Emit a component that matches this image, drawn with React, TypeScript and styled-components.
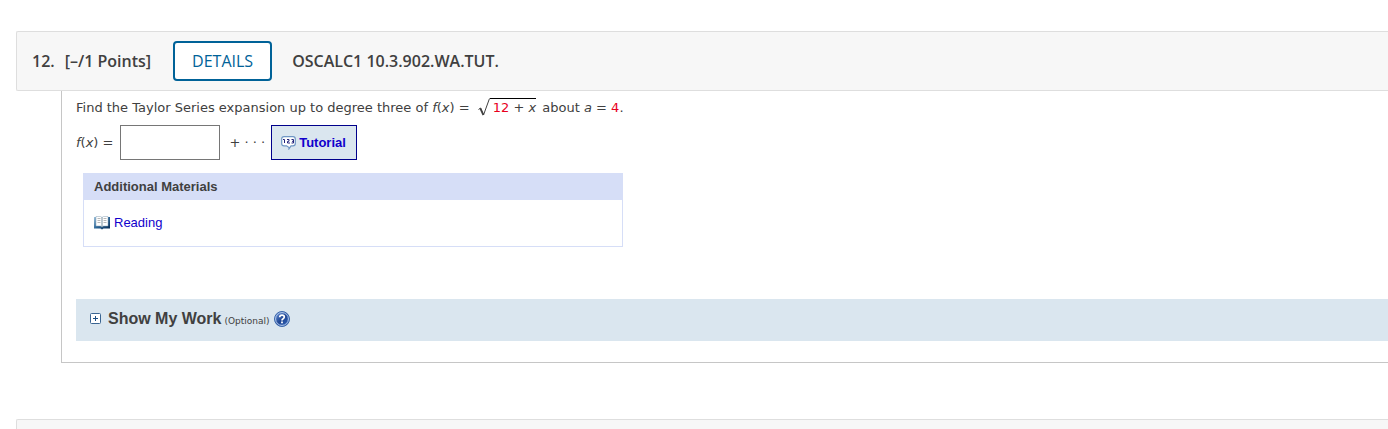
import React from "react";
import styled, { createGlobalStyle } from "styled-components";

const GlobalStyle = createGlobalStyle`
  * { box-sizing: border-box; }
  body {
    margin: 0;
    background: #fff;
    color: #404040;
    font: 13px/18px Verdana, "DejaVu Sans", sans-serif;
  }
`;

const Page = styled.main`
  display: flex;
  flex-direction: column;
  min-height: 100vh;
  padding: 31px 0 0 16px;
  overflow: hidden;
`;

const HeaderBar = styled.header`
  display: flex;
  align-items: center;
  padding: 9px 15px;
  background: #f7f7f7;
  border: 1px solid #dedede;
  border-right: 0;
  border-radius: 2px 0 0 2px;
  font: 600 16px/24px "Open Sans", sans-serif;
`;

const QuestionNumber = styled.span`
  margin-right: 10px;
`;

const Points = styled.span`
  margin-right: 22px;
`;

const DetailsButton = styled.button`
  height: 40px;
  margin-right: 20px;
  padding: 0 17px;
  background: #fff;
  border: 2px solid #006298;
  border-radius: 4px;
  color: #006298;
  font: 400 16px/24px "Open Sans", sans-serif;
`;

const QuestionBody = styled.section`
  margin-left: 45px;
  padding: 7px 0 21px 14px;
  border: solid #c6c6c6;
  border-width: 0 0 1px 1px;
`;

const Statement = styled.p`
  margin: 0 0 8px;
  white-space: nowrap;
`;

const Given = styled.span`
  color: #e8001c;
`;

const Root = styled.span`
  display: inline-flex;
  align-items: flex-end;
  margin: 0 2px 0 4px;
  vertical-align: bottom;
`;

const Radicand = styled.span`
  padding-left: 3px;
  border-top: 1px solid #000;
  line-height: 18px;
`;

const AnswerRow = styled.form`
  display: flex;
  align-items: center;
`;

const AnswerInput = styled.input`
  width: 100px;
  height: 35px;
  margin: 0 9px 0 7px;
  padding: 4px;
  background: #fff;
  border: 1px solid #767676;
  font: inherit;
`;

const TutorialButton = styled.button`
  display: flex;
  align-items: center;
  gap: 3px;
  height: 35px;
  margin-left: 6px;
  padding: 0 10px 0 9px;
  background: #dae6ef;
  border: 1px solid #00008b;
  color: #10c;
  font: bold 13px/18px Arial, "Liberation Sans", sans-serif;
`;

const Materials = styled.section`
  max-width: 540px;
  margin: 13px 7px 52px;
  border: 1px solid #d6def7;
  font: 13px/18px Arial, "Liberation Sans", sans-serif;
`;

const MaterialsTitle = styled.h2`
  margin: 0;
  padding: 4px 10px;
  background: #d6def7;
  font: inherit;
  font-weight: bold;
`;

const MaterialsContent = styled.div`
  display: flex;
  padding: 14px 10px;
`;

const ReadingLink = styled.a`
  display: flex;
  align-items: center;
  gap: 4px;
  color: #10c;
  text-decoration: none;
`;

const WorkBar = styled.section`
  display: flex;
  align-items: center;
  padding: 0 14px 3px;
  min-height: 42px;
  background: #dae6ef;
`;

const WorkToggle = styled.button`
  display: flex;
  align-items: center;
  gap: 7px;
  padding: 0;
  background: none;
  border: 0;
  color: inherit;
  font: bold 16px/20px Arial, "Liberation Sans", sans-serif;
`;

const Optional = styled.small`
  margin: 4px 4px 0 3px;
  font-size: 9px;
  line-height: 12px;
`;

const HelpButton = styled.button`
  display: flex;
  padding: 0;
  background: none;
  border: 0;
`;

const NextHeader = styled.div`
  flex: 1;
  min-height: 10px;
  margin-top: 56px;
  background: #f7f7f7;
  border: solid #dedede;
  border-width: 1px 0 0 1px;
  border-radius: 2px 0 0;
`;

const RadicalSign = () => (
  <svg width="12" height="19" viewBox="0 0 12 19" aria-hidden="true">
    <path d="M0.5 11.5 2.5 10 5.5 17 11.5 .5" fill="none" stroke="#404040" strokeWidth="1" />
    <path d="M2.3 10.3 5.4 17" stroke="#404040" strokeWidth="1.8" />
  </svg>
);

const ChatIcon = () => (
  <svg width="15" height="14" viewBox="0 0 15 14" aria-hidden="true">
    <path
      d="M3 .7h9q2.300 0 2.300 2.300v4.500q0 2.300-2.300 2.300h-2L8 12.800V11.500L5.500 9.800H3Q.7 9.800 .7 7.500V3Q.7 .7 3 .7Z"
      fill="#fff"
      stroke="#6f96c4"
      strokeWidth="1.200"
    />
    <path
      d="M2 3.500h1.500V7M6 3.500h2v1.700L6.500 5.500V7H9M10.500 3.500h2V7h-2M11 5.300h1.500"
      fill="none"
      stroke="#24247c"
    />
  </svg>
);

const BookIcon = () => (
  <svg width="16" height="14" viewBox="0 0 16 14" aria-hidden="true">
    <defs>
      <linearGradient id="cover" x2="1" y2="1">
        <stop stopColor="#9fc3dc" />
        <stop offset=".5" stopColor="#2b6596" />
        <stop offset="1" stopColor="#08294f" />
      </linearGradient>
    </defs>
    <path d="M0 1h16v11.500H9.500L8 13.500 6.500 12.500H0Z" fill="url(#cover)" />
    <path d="M2 .5h4.500L8 1.500 9.500 .5H14V10H9.500L8 11 6.500 10H2Z" fill="#fff" stroke="#8aa2b5" strokeWidth=".5" />
    <path d="M8 1.500V11" stroke="#78909f" />
    <path d="M3.500 2.500h3M3.500 4.500h3M3.500 6.500h3M9.500 2.500h3M9.500 4.500h3M9.500 6.500h3" stroke="#b8b8b8" />
  </svg>
);

const PlusIcon = () => (
  <svg width="11" height="11" viewBox="0 0 11 11" aria-hidden="true">
    <rect x=".5" y=".5" width="10" height="10" rx="1" fill="#fff" stroke="#3a6592" />
    <path d="M3 5.500h5M5.500 3v5" stroke="#1d4f84" />
  </svg>
);

const HelpIcon = () => (
  <svg width="16" height="16" viewBox="0 0 16 16" aria-hidden="true">
    <defs>
      <linearGradient id="help" x2="1" y2="1">
        <stop stopColor="#6f9be0" />
        <stop offset=".5" stopColor="#1f4693" />
        <stop offset="1" stopColor="#3568bc" />
      </linearGradient>
    </defs>
    <circle cx="8" cy="8" r="7.500" fill="url(#help)" stroke="#3c68ac" />
    <circle cx="8" cy="8" r="6.400" fill="none" stroke="#b4cbee" />
    <path d="M5.700 6.300Q5.700 4.200 8 4.200t2.300 1.800q0 1-1.200 1.700Q8 8.300 8 9.500" fill="none" stroke="#fff" strokeWidth="1.700" />
    <path d="M7.100 10.500h1.800v1.700H7.100Z" fill="#fff" />
  </svg>
);

export default function App() {
  return (
    <>
      <GlobalStyle />
      <Page>
        <HeaderBar>
          <QuestionNumber>12.</QuestionNumber>
          <Points>[–/1 Points]</Points>
          <DetailsButton type="button">DETAILS</DetailsButton>
          <span>OSCALC1 10.3.902.WA.TUT.</span>
        </HeaderBar>
        <QuestionBody>
          <Statement>
            Find the Taylor Series expansion up to degree three of <i>f</i>(<i>x</i>) ={" "}
            <Root>
              <RadicalSign />
              <Radicand>
                <Given>12</Given> + <i>x</i>
              </Radicand>
            </Root>{" "}
            about <i>a</i> = <Given>4</Given>.
          </Statement>
          <AnswerRow>
            <label htmlFor="answer">
              <i>f</i>(<i>x</i>) =
            </label>
            <AnswerInput id="answer" type="text" />
            <span>+ · · ·</span>
            <TutorialButton type="button">
              <ChatIcon />
              Tutorial
            </TutorialButton>
          </AnswerRow>
          <Materials>
            <MaterialsTitle>Additional Materials</MaterialsTitle>
            <MaterialsContent>
              <ReadingLink href="#reading">
                <BookIcon />
                Reading
              </ReadingLink>
            </MaterialsContent>
          </Materials>
          <WorkBar>
            <WorkToggle type="button">
              <PlusIcon />
              Show My Work
            </WorkToggle>
            <Optional>(Optional)</Optional>
            <HelpButton type="button" aria-label="Help">
              <HelpIcon />
            </HelpButton>
          </WorkBar>
        </QuestionBody>
        <NextHeader />
      </Page>
    </>
  );
}
